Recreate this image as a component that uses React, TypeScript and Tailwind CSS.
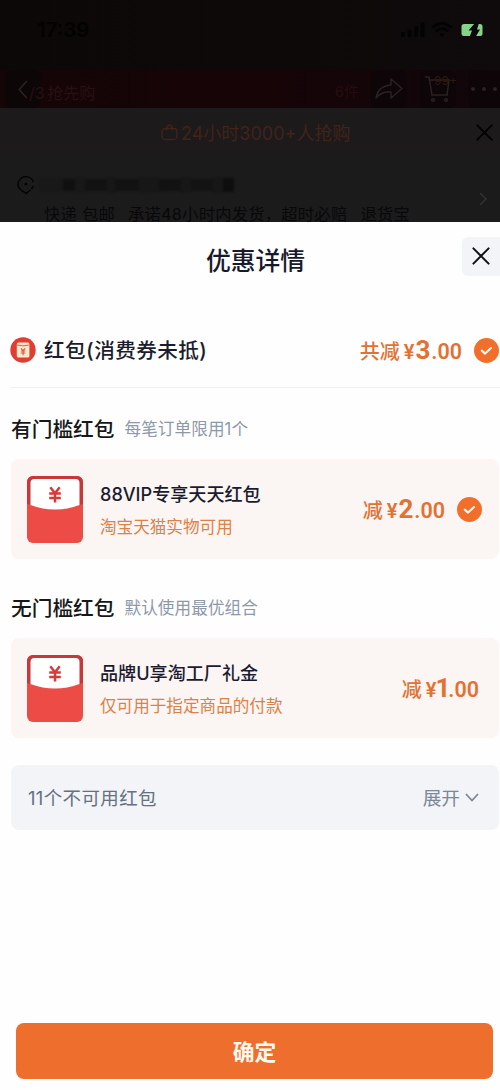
import type { ReactNode } from "react";

const bodyFont = "font-['Inter','Noto_Sans_CJK_SC',sans-serif]";

function CheckBadge() {
  return (
    <svg viewBox="0 0 25 25" className="size-[25px] shrink-0">
      <circle cx="12.5" cy="12.5" r="12.5" fill="#f26f2b" />
      <path d="M7.8 12.600l3.300 3 5.900-5.600" fill="none" stroke="#fff8f0" strokeWidth="2.1" strokeLinecap="round" strokeLinejoin="round" />
    </svg>
  );
}

function CloseIcon({ className }: { className: string }) {
  return (
    <svg viewBox="0 0 18 18" className={className} fill="none" stroke="currentColor" strokeWidth="2" strokeLinecap="round">
      <path d="M1.4 1.4l15.2 15.2M16.6 1.4L1.4 16.6" />
    </svg>
  );
}

function Envelope() {
  return (
    <svg viewBox="0 0 56 67" className="h-[67px] w-14 shrink-0">
      <rect width="56" height="67" rx="6" fill="#ec4c45" />
      <path d="M0 29V6a6 6 0 0 1 6-6h44a6 6 0 0 1 6 6v23z" fill="#c6383a" />
      <path d="M0 28q28 10 56 0v6H0z" fill="#ec4c45" />
      <path d="M3.500 29V7a4 4 0 0 1 4-4h41a4 4 0 0 1 4 4v22q-24.500 9-49 0z" fill="#fff" />
      <path d="M23.300 11.200l4.700 6 4.700-6M22.200 17.500h11.600M22.200 22h11.600M28 17v9.500" fill="none" stroke="#d8393a" strokeWidth="2.500" />
    </svg>
  );
}

function PacketIcon() {
  return (
    <svg viewBox="0 0 26 26" className="size-[26px] shrink-0">
      <circle cx="13" cy="13" r="12.700" fill="#e13d33" />
      <rect x="6.800" y="5.600" width="12.600" height="15" rx="1.500" fill="#ffe9cb" />
      <path d="M7 8q6 1.800 12.200 0" fill="none" stroke="#e2604a" strokeWidth="1" />
      <path d="M11 11.300l2.100 2.300 2.100-2.300M10.900 14h4.400M10.900 16h4.400M13.100 13.700v4.500" fill="none" stroke="#dc5548" strokeWidth="1.100" />
    </svg>
  );
}

function Price({ label, whole, tight = false }: { label: string; whole: string; tight?: boolean }) {
  return (
    <div className="flex items-baseline pt-0.5 leading-8 whitespace-nowrap text-[#e27233]">
      <span className="text-[20px] font-medium">{label}</span>
      <span className="ml-1 font-['Roboto',sans-serif] text-[20px] font-semibold">¥</span>
      <span className={`font-['Roboto',sans-serif] text-[26px] font-bold ${tight ? "-mr-[3px] -ml-px" : "ml-px"}`}>{whole}</span>
      <span className="ml-px font-['Roboto',sans-serif] text-[21.500px] font-semibold">.00</span>
    </div>
  );
}

function SectionTitle({ title, note }: { title: string; note: string }) {
  return (
    <div className="flex h-8 items-center pl-[11px] whitespace-nowrap">
      <h2 className="pt-[3px] text-[20.700px] leading-8 font-medium text-[#171719]">{title}</h2>
      <span className="ml-[10px] pt-px text-[16.600px] leading-8 tracking-[0.1px] text-[#8f98a8]">{note}</span>
    </div>
  );
}

function Coupon({ title, note, children }: { title: string; note: string; children: ReactNode }) {
  return (
    <div className="ml-[11px] flex h-[100px] w-[488px] items-center rounded-lg bg-[#fbf5f3] pl-4">
      <Envelope />
      <div className="ml-[17px] flex flex-col pt-[3px] whitespace-nowrap">
        <span className="text-[18.100px] leading-[33px] font-medium text-[#1b1b30]">{title}</span>
        <span className="text-[16.600px] leading-[33px] text-[#dc8148]">{note}</span>
      </div>
      <div className="ml-auto flex items-center">{children}</div>
    </div>
  );
}

function StatusBar() {
  return (
    <div className="flex h-[70px] items-start bg-gradient-to-r from-[#0b0807] to-[#0f0a0b] pt-4 pr-[17px] pl-[37px]">
      <span className="text-[20.500px] leading-[27px] font-semibold text-[#020202]">17:39</span>
      <div className="ml-auto flex h-[27px] items-center">
        <svg viewBox="0 0 25 16" className="h-4 w-[25px]" fill="#040303">
          <rect x="0" y="10" width="4" height="5" rx="1" />
          <rect x="6.500" y="7.500" width="4" height="7.500" rx="1" />
          <rect x="13" y="4" width="4" height="11" rx="1" />
          <rect x="19.500" y="0" width="4" height="15" rx="1" />
        </svg>
        <svg viewBox="0 0 22 16" className="ml-[5px] h-4 w-[22px]" fill="none" stroke="#040303" strokeWidth="2.800">
          <path d="M1.500 5.500q9.500-8.500 19 0M5 9.200q6-5.200 12 0" />
          <path d="M8.200 12.200q2.800-2 5.600 0L11 15z" fill="#040303" stroke="none" />
        </svg>
        <svg viewBox="0 0 22 14" className="ml-2 h-[14px] w-[22px]">
          <rect x="0.500" y="1" width="21" height="12" rx="2.500" fill="#83d489" />
          <path d="M14 0L7.500 7.500h3.500L8.500 14h6L19 6.500h-3L18 0z" fill="#0b0808" />
        </svg>
      </div>
    </div>
  );
}

function Backdrop() {
  return (
    <div className="flex h-[222px] flex-col overflow-hidden">
      <StatusBar />
      <div className="flex h-[38px] shrink-0 items-center bg-gradient-to-r from-[#140506] via-[#170407] to-[#10060a]">
        <div className="ml-[5px] flex h-[38px] w-9 items-center justify-center rounded-lg bg-[#0d0606]">
          <svg viewBox="0 0 12 20" className="h-[19px] w-3" fill="none" stroke="#292122" strokeWidth="1.700"><path d="M10 1L2 10l8 9" /></svg>
        </div>
        <span className="-ml-3 pt-2 text-[16px] whitespace-nowrap text-[#271113]"><span className="-mr-0.5">/3</span> 抢先购</span>
        <span className="ml-auto pt-1.5 text-[15px] text-[#270c0d]">6件</span>
        <div className="ml-3 flex h-[38px] w-[36px] items-center justify-center rounded-lg bg-[#0d0507]">
          <svg viewBox="0 0 28 22" className="h-[22px] w-7" fill="none" stroke="#292123" strokeWidth="1.500" strokeLinejoin="round">
            <path d="M16 1l11 9.500L16 20v-6Q7 13 1 20 3 8 16 7z" />
          </svg>
        </div>
        <div className="ml-[13px] flex h-[38px] w-9 items-center justify-center rounded-lg bg-[#0d0507]">
          <div className="relative">
            <svg viewBox="0 0 28 28" className="size-7" fill="none" stroke="#292123" strokeWidth="1.500">
              <path d="M1 2h4l3 18h16M6 5h19l-2 15" />
              <circle cx="9" cy="25" r="1.300" /><circle cx="22" cy="25" r="1.300" />
            </svg>
            <span className="absolute -top-0.5 left-2.5 text-[12px] leading-4 text-[#2e1a0b]">99+</span>
          </div>
        </div>
        <div className="ml-3 flex h-[38px] w-8 items-center justify-center gap-[7px] rounded-l-lg bg-[#0d0507]">
          <i className="size-1 shrink-0 rounded-full bg-[#292123]" />
          <i className="size-1 shrink-0 rounded-full bg-[#292123]" />
          <i className="size-1 shrink-0 rounded-full bg-[#292123]" />
        </div>
      </div>
      <div className="flex h-[48px] shrink-0 items-center bg-[#1c1a1a] pl-[161px]">
        <svg viewBox="0 0 17 17" className="size-[17px]" fill="none" stroke="#42231a" strokeWidth="1.400">
          <path d="M4 4.500h9a3 3 0 0 1 3 3v5a3 3 0 0 1-3 3H4a3 3 0 0 1-3-3v-5a3 3 0 0 1 3-3zM5.500 6.500q0-5.500 3-5.500t3 5.500" />
        </svg>
        <span className="ml-[3px] pt-0.5 text-[18px] whitespace-nowrap text-[#42231a]">24小时3000+人抢购</span>
        <CloseIcon className="mr-[7px] ml-auto size-[17px] text-[#020202]" />
      </div>
      <div className="flex h-[66px] shrink-0 bg-[#1b1b1b] pr-[13px] pl-[17px]">
        <div className="flex flex-col">
          <div className="flex h-[50px] shrink-0 items-center pt-[7px]">
            <svg viewBox="0 0 18 20" className="h-5 w-[18px]" fill="none" stroke="#050505" strokeWidth="1.500">
              <path d="M16.500 7A8 8 0 0 0 1 9q0 5 6 8l2 1.500L13.500 15M16.500 11L14.500 14" /><circle cx="9" cy="9" r="1.500" fill="#050505" stroke="none" />
            </svg>
            <div className="ml-1 flex h-[18px] w-[195px] items-center blur-[1px]">
              <i className="h-3.5 w-6 bg-[#181819]" /><i className="h-3 w-3 bg-[#101011]" />
              <i className="h-4 w-2.5 bg-[#181819]" /><i className="h-3 w-[22px] bg-[#121213]" />
              <i className="h-4 w-2 bg-[#171718]" /><i className="h-3 w-6 bg-[#121213]" />
              <i className="h-4 w-5 bg-[#171718]" /><i className="h-3 w-[22px] bg-[#121213]" />
              <i className="h-4 w-2.5 bg-[#171718]" /><i className="h-3 w-[22px] bg-[#131314]" />
              <i className="h-4 w-2.5 bg-[#171718]" /><i className="h-3.5 w-[11px] bg-[#0e0e0f]" />
            </div>
          </div>
          <div className="flex pl-[27px] text-[16.300px] leading-[16px] tracking-[0.250px] whitespace-nowrap text-[#08080a]">
            <span>快递 包邮</span><span className="ml-[13px]">承诺48小时内发货，超时必赔</span><span className="ml-[13px]">退货宝</span>
          </div>
        </div>
        <svg viewBox="0 0 8 14" className="mt-[36px] ml-auto h-[14px] w-2" fill="none" stroke="#343434" strokeWidth="1.400"><path d="M1 1l6 6-6 6" /></svg>
      </div>
    </div>
  );
}

export default function App() {
  return (
    <main className={`${bodyFont} flex h-[1090px] w-[500px] flex-col overflow-hidden bg-[#1b1b1b]`}>
      <Backdrop />
      <section className="flex flex-1 flex-col bg-[#fefefe]">
        <header className="grid h-[78px] grid-cols-[1fr_auto_1fr] items-center">
          <span />
          <h1 className="ml-[11px] text-[24.800px] leading-9 font-medium text-[#181a2b]">优惠详情</h1>
          <button className="mb-[10px] flex h-[39px] w-[38px] items-center justify-center justify-self-end rounded-l-md bg-[#f2f4f8]">
            <CloseIcon className="size-[18px] text-[#101014]" />
          </button>
        </header>
        <div className="mt-[10px] ml-[10px] flex h-[78px] items-center border-b border-[#f0f0f2] pr-px pt-[3px] whitespace-nowrap">
          <PacketIcon />
          <span className="ml-2 pt-[3px] text-[20.600px] font-medium tracking-[0.450px] text-[#1b1d2d]">红包(消费券未抵)</span>
          <div className="mr-3 ml-auto"><Price label="共减" whole="3" /></div>
          <CheckBadge />
        </div>
        <div className="mt-6"><SectionTitle title="有门槛红包" note="每笔订单限用1个" /></div>
        <div className="mt-[15px]">
          <Coupon title="88VIP专享天天红包" note="淘宝天猫实物可用">
            <Price label="减" whole="2" />
            <div className="mr-[17px] ml-3"><CheckBadge /></div>
          </Coupon>
        </div>
        <div className="mt-8"><SectionTitle title="无门槛红包" note="默认使用最优组合" /></div>
        <div className="mt-[15px]">
          <Coupon title="品牌U享淘工厂礼金" note="仅可用于指定商品的付款">
            <div className="mr-5"><Price label="减" whole="1" tight /></div>
          </Coupon>
        </div>
        <div className="mt-[27px] ml-[11px] flex h-[65px] w-[488px] items-center rounded-lg bg-[#f2f4f8] pr-5 pl-[17px]">
          <span className="pt-0.5 text-[18.500px] tracking-[0.350px] text-[#667080]">11个不可用红包</span>
          <span className="ml-auto pt-[3px] text-[18.700px] text-[#7c8798]">展开</span>
          <svg viewBox="0 0 14 9" className="ml-[5px] h-[9px] w-[14px]" fill="none" stroke="#7c8798" strokeWidth="1.800"><path d="M1 1l6 6.500L13 1" /></svg>
        </div>
        <button className="mt-auto mb-[11px] ml-4 flex h-[56px] w-[477px] items-center justify-center rounded-lg bg-[#ee6e2e] pt-0.5 text-[21.800px] font-bold text-[#fff9ee]">
          确定
        </button>
      </section>
    </main>
  );
}
